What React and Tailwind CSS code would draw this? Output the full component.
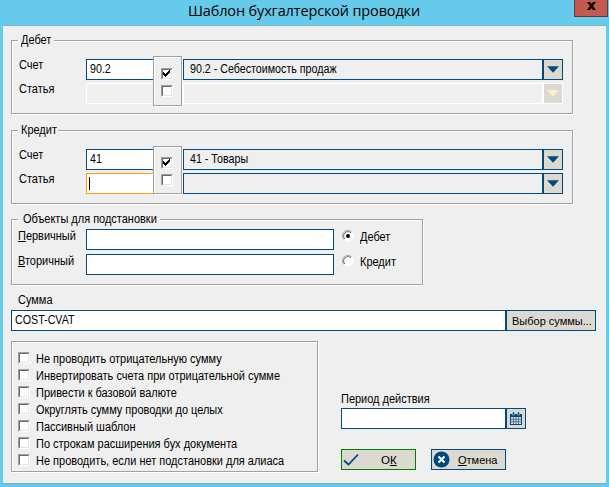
const groove =
  'border border-[#a0a0a0] shadow-[1px_1px_0_#fff,inset_1px_1px_0_#fff]';
const field = 'h-[21px] border border-[#004a80] bg-white';
const txt = 'block w-max origin-left scale-x-[0.915] whitespace-nowrap leading-[14px]';
const valueTxt = 'block w-max origin-left scale-x-[0.89] whitespace-nowrap leading-[14px]';

function Check({ checked }) {
  return (
    <span className="block h-3 w-3 shrink-0 border border-t-[#a0a0a0] border-l-[#a0a0a0] border-r-white border-b-white">
      <span className="block h-2.5 w-2.5 border border-t-[#696969] border-l-[#696969] border-r-[#e3e3e3] border-b-[#e3e3e3] bg-white">
        {checked && (
          <svg viewBox="0 0 8 8" className="block h-2 w-2" shapeRendering="crispEdges">
            <path d="M0 2h1v1h1v1h1v-1h1v-1h1v-1h1v-1h1v3h-1v1h-1v1h-1v1h-1v1h-1v-1h-1v-1h-1z" fill="#000" />
          </svg>
        )}
      </span>
    </span>
  );
}

function Radio({ checked }) {
  return (
    <svg viewBox="0 0 12 12" className="block h-3 w-3 shrink-0">
      <circle cx="6" cy="6" r="5" fill="#fff" />
      <path d="M9.6 2A5.3 5.3 0 0 0 2 9.6" fill="none" stroke="#a0a0a0" />
      <path d="M9 2.9A4.3 4.3 0 0 0 2.9 9" fill="none" stroke="#696969" />
      <path d="M9.6 2A5.3 5.3 0 0 1 2 9.6" fill="none" stroke="#fff" />
      {checked && <circle cx="6" cy="6" r="2" fill="#000" />}
    </svg>
  );
}

function Combo({ children, disabled }) {
  return (
    <div className="flex">
      <div className={`h-[21px] w-[360px] border pt-[2px] pl-1.5 ${disabled ? 'border-white' : 'border-[#004a80]'}`}>
        {children}
      </div>
      <div className={`flex h-[21px] w-5 items-center justify-center border bg-[#dcd9d0] ${disabled ? 'border-white' : 'border-[#004a80]'}`}>
        <svg viewBox="0 0 12 7" className="h-[7px] w-3">
          <path d="M0 .3h12L6 6.8z" fill={disabled ? '#ffefcf' : '#004a80'} />
        </svg>
      </div>
    </div>
  );
}

function Legend({ children, className }) {
  return (
    <span className={`absolute top-[-8px] bg-[#efefef] ${className}`}>
      <span className={txt}>{children}</span>
    </span>
  );
}

function AccountGroup({ title, legendClass, code, name, disabled, className, panelClass, checksClass }) {
  return (
    <section className={`relative ml-2 flex h-[74px] w-[562px] pl-[7px] ${groove} ${className}`}>
      <Legend className={legendClass}>{title}</Legend>
      <div className="w-[67px] pt-[17px]">
        <span className={`${txt} mb-2.5`}>Счет</span>
        <span className={txt}>Статья</span>
      </div>
      <div className="flex w-[67px] flex-col gap-[3px] pt-[18px]">
        <div className={`${field} border-r-0 pt-[2px] pl-[3px]`}>
          <span className={valueTxt}>{code}</span>
        </div>
        {disabled ? (
          <div className="h-[21px] border border-r-0 border-white" />
        ) : (
          <div className="h-[21px] border border-r-0 border-[#ffa500] bg-white pt-[3px] pl-0.5">
            <div className="h-[13px] w-px bg-black" />
          </div>
        )}
      </div>
      <div className={`w-[29px] pl-[7px] ${groove} ${panelClass}`}>
        <div className={`flex flex-col gap-[5px] ${checksClass}`}>
          <Check checked />
          <Check />
        </div>
      </div>
      <div className="ml-px flex flex-col gap-[3px] pt-[18px]">
        <Combo>
          <span className={valueTxt}>{name}</span>
        </Combo>
        <Combo disabled={disabled} />
      </div>
    </section>
  );
}

const options = [
  'Не проводить отрицательную сумму',
  'Инвертировать счета при отрицательной сумме',
  'Привести к базовой валюте',
  'Округлять сумму проводки до целых',
  'Пассивный шаблон',
  'По строкам расширения бух документа',
  'Не проводить, если нет подстановки для алиаса',
];

export default function App() {
  return (
    <div className="flex h-[487px] w-[609px] flex-col overflow-hidden bg-[#66caea] font-['Liberation_Sans',Arial,sans-serif] text-[12px] text-black">
      <header className="flex h-[25px] shrink-0">
        <h1 className="w-[574px] pl-[188px] font-['Open_Sans','Noto_Sans',sans-serif] text-[14.5px] leading-[21px] tracking-[-0.15px] whitespace-nowrap">
          Шаблон бухгалтерской проводки
        </h1>
        <div className="flex h-[17px] w-[34px] items-center justify-center border border-t-0 border-[#5d3b3f] bg-[#c35a50]">
          <svg viewBox="0 0 9 8" className="mb-1 h-2 w-[9px]">
            <path d="M0 0h3l1.5 2L6 0h3L6 4l3 4H6L4.500 6 3 8H0l3-4z" fill="#000" />
          </svg>
        </div>
      </header>
      <main className="ml-[3px] h-[459px] w-[603px] border-t border-b border-t-[#78b4c8] border-b-[#78b4c8] bg-[#efefef]">
        <AccountGroup title="Дебет" legendClass="left-1.5 w-9 pl-[3px]" code="90.2" name="90.2 - Себестоимость продаж" disabled className="mt-3.5" panelClass="mt-[15px] h-[50px]" checksClass="pt-[11px]" />
        <AccountGroup title="Кредит" legendClass="left-1.5 w-10 pl-[3px]" code="41" name="41 - Товары" className="mt-4" panelClass="mt-[15px] h-12" checksClass="pt-2.5" />

        <section className={`relative mt-[15px] ml-2 flex h-[66px] w-[412px] pl-1.5 ${groove}`}>
          <Legend className="left-1.5 w-[142px] pl-[5px]">Объекты для подстановки</Legend>
          <div className="w-[68px] pt-[9px]">
            <span className={`${txt} mb-[11px]`}><u>П</u>ервичный</span>
            <span className={txt}><u>В</u>торичный</span>
          </div>
          <div className="flex w-[248px] flex-col gap-1 pt-[9px]">
            <div className={field} />
            <div className={field} />
          </div>
          <div className="flex flex-col gap-[11px] pt-2.5 pl-2">
            <div className="flex h-3.5 gap-1.5"><Radio checked /><span className={txt}>Дебет</span></div>
            <div className="flex h-3.5 gap-1.5"><Radio /><span className={txt}>Кредит</span></div>
          </div>
        </section>

        <span className={`${txt} mt-2 ml-[15px]`}>Сумма</span>
        <div className="mt-[3px] ml-2 flex">
          <div className={`${field} w-[495px] pt-[2px] pl-[3px]`}>
            <span className={valueTxt}>COST-CVAT</span>
          </div>
          <button className="h-[21px] w-[90px] border border-[#004a80] bg-[#dcd9d0] pl-[5px] text-left text-[11px] leading-[20px] whitespace-nowrap">
            Выбор суммы...
          </button>
        </div>

        <div className="mt-2.5 ml-2 flex">
          <section className={`flex h-[131px] w-[307px] flex-col gap-[3px] pt-2.5 pl-1.5 ${groove}`}>
            {options.map((label) => (
              <label key={label} className="flex h-3.5 gap-1.5">
                <Check />
                <span className={txt}>{label}</span>
              </label>
            ))}
          </section>
          <section className="ml-[23px] w-[185px] pt-[51px]">
            <span className={txt}>Период действия</span>
            <div className="mt-0.5 flex">
              <div className={`${field} w-[165px]`} />
              <button className="flex h-[21px] w-5 items-center justify-center border border-[#004a80] bg-[#dcd9d0]">
                <svg viewBox="0 0 12 13" className="h-[13px] w-3">
                  <path d="M0 2h12v11H0z" fill="#004a80" />
                  <path d="M1 5h10v7H1z" fill="#dcd9d0" />
                  <path d="M3.500 5v7M6 5v7M8.500 5v7M1 7.300h10M1 9.700h10" stroke="#004a80" strokeWidth=".6" />
                  <path d="M2.500 0h2v3h-2zM7.500 0h2v3h-2z" fill="#004a80" stroke="#dcd9d0" strokeWidth=".5" />
                </svg>
              </button>
            </div>
            <div className="mt-5 flex gap-[15px] text-[11px] leading-[20px]">
              <button className="flex h-[21px] w-[75px] border border-[#008000] bg-[#dcd9d0]">
                <svg viewBox="0 0 18 19" className="h-[19px] w-[18px]">
                  <path d="M2 10.500 6.500 14.500 16 4.500" fill="none" stroke="#004a80" strokeWidth="1.8" />
                </svg>
                <span className="ml-[21px] text-[11.5px]">О<u>К</u></span>
              </button>
              <button className="flex h-[21px] w-[75px] border border-[#004a80] bg-[#dcd9d0]">
                <svg viewBox="0 0 19 19" className="h-[19px] w-[19px]">
                  <circle cx="9.500" cy="9.500" r="8" fill="#004a80" />
                  <path d="m6.500 6.500 6 6m0-6-6 6" stroke="#fff" strokeWidth="2" />
                </svg>
                <span className="ml-[7px]"><u>О</u>тмена</span>
              </button>
            </div>
          </section>
        </div>
      </main>
    </div>
  );
}
